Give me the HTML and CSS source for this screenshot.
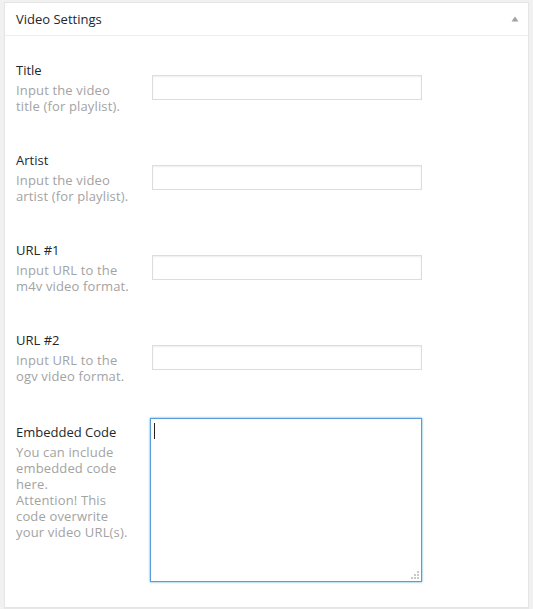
FILE: index.html
```html
<!DOCTYPE html>
<html>
<head>
<meta charset="utf-8">
<link rel="stylesheet" href="styles.css">
</head>
<body>
<div class="postbox">
  <div class="hndle">
    <h2 class="hndle-title">Video Settings</h2>
    <svg class="toggle" width="8" height="6" viewBox="0 0 8 6"><polygon points="4,0.5 7.5,5.5 0.5,5.5" fill="#9ea3a8"/></svg>
  </div>
  <div class="inside">
    <table class="form-table">
      <tr>
        <th><div class="label">Title</div><div class="desc">Input the video<br>title (for playlist).</div></th>
        <td><input class="field" type="text"></td>
      </tr>
      <tr>
        <th><div class="label">Artist</div><div class="desc">Input the video<br>artist (for playlist).</div></th>
        <td><input class="field" type="text"></td>
      </tr>
      <tr>
        <th><div class="label">URL #1</div><div class="desc">Input URL to the<br>m4v video format.</div></th>
        <td><input class="field" type="text"></td>
      </tr>
      <tr>
        <th><div class="label">URL #2</div><div class="desc">Input URL to the<br>ogv video format.</div></th>
        <td><input class="field" type="text"></td>
      </tr>
      <tr class="row-code">
        <th><div class="label">Embedded Code</div><div class="desc">You can include<br>embedded code<br>here.<br>Attention! This<br>code overwrite<br>your video URL(s).</div></th>
        <td>
          <div class="ta-wrap">
            <textarea class="code"></textarea>
            <span class="caret"></span>
            <svg class="grip" width="8" height="8" viewBox="0 0 8 8">
              <rect x="6" y="0" width="2" height="2" fill="#c8c8c8"/>
              <rect x="3" y="3" width="2" height="2" fill="#c8c8c8"/>
              <rect x="6" y="3" width="2" height="2" fill="#c8c8c8"/>
              <rect x="0" y="6" width="2" height="2" fill="#c8c8c8"/>
              <rect x="3" y="6" width="2" height="2" fill="#c8c8c8"/>
              <rect x="6" y="6" width="2" height="2" fill="#c8c8c8"/>
            </svg>
          </div>
        </td>
      </tr>
    </table>
  </div>
</div>
</body>
</html>
```
FILE: styles.css
```css
* { box-sizing: border-box; }
html, body {
  margin: 0;
  padding: 0;
  background: #f1f1f1;
  font-family: "Open Sans", "Liberation Sans", sans-serif;
  font-size: 13px;
  color: #23282d;
}
.postbox {
  margin: 2px 4px 2px 4px;
  background: #fff;
  border: 1px solid #e5e5e5;
  box-shadow: 0 1px 1px rgba(0,0,0,0.04);
}
.hndle {
  display: flex;
  align-items: center;
  justify-content: space-between;
  height: 33px;
  padding: 0 9px 0 11px;
  border-bottom: 1px solid #eee;
}
.hndle-title {
  margin: 0;
  font-size: 13px;
  font-weight: 400;
  line-height: 18px;
  color: #23282d;
}
.toggle {
  display: block;
  margin-top: -1px;
}
.inside {
  padding: 6px 0 10px 0;
}
.form-table {
  border-collapse: collapse;
  border-spacing: 0;
}
.form-table th {
  width: 134px;
  padding: 19px 10px 18px 11px;
  text-align: left;
  vertical-align: top;
  font-weight: 400;
}
.form-table td {
  padding: 15px 10px 15px 10px;
  vertical-align: middle;
}
.row-code th { padding-top: 21px; }
.row-code td { padding-top: 16px; }
.label {
  line-height: 18px;
  color: #23282d;
  white-space: nowrap;
}
.desc {
  margin-top: 3px;
  line-height: 16px;
  color: #a3a3a3;
  letter-spacing: 0.15px;
  white-space: nowrap;
}
.field {
  display: block;
  width: 270px;
  height: 25px;
  margin: 0 0 0 3px;
  padding: 3px 5px;
  border: 1px solid #ddd;
  border-radius: 0;
  background: #fff;
  box-shadow: inset 0 1px 2px rgba(0,0,0,0.07);
  font-family: inherit;
  font-size: 13px;
  outline: none;
}
.ta-wrap {
  position: relative;
  width: 272px;
  height: 164px;
  margin-left: 1px;
}
.code {
  display: block;
  width: 272px;
  height: 164px;
  margin: 0;
  padding: 4px;
  border: 1px solid #5b9dd9;
  border-radius: 0;
  background: #fff;
  box-shadow: 0 0 2px rgba(30,140,190,0.8);
  resize: none;
  outline: none;
  font-family: inherit;
  font-size: 13px;
}
.caret {
  position: absolute;
  left: 4px;
  top: 5px;
  width: 1px;
  height: 16px;
  background: #222;
}
.grip {
  position: absolute;
  right: 3px;
  bottom: 3px;
  display: block;
}
```
